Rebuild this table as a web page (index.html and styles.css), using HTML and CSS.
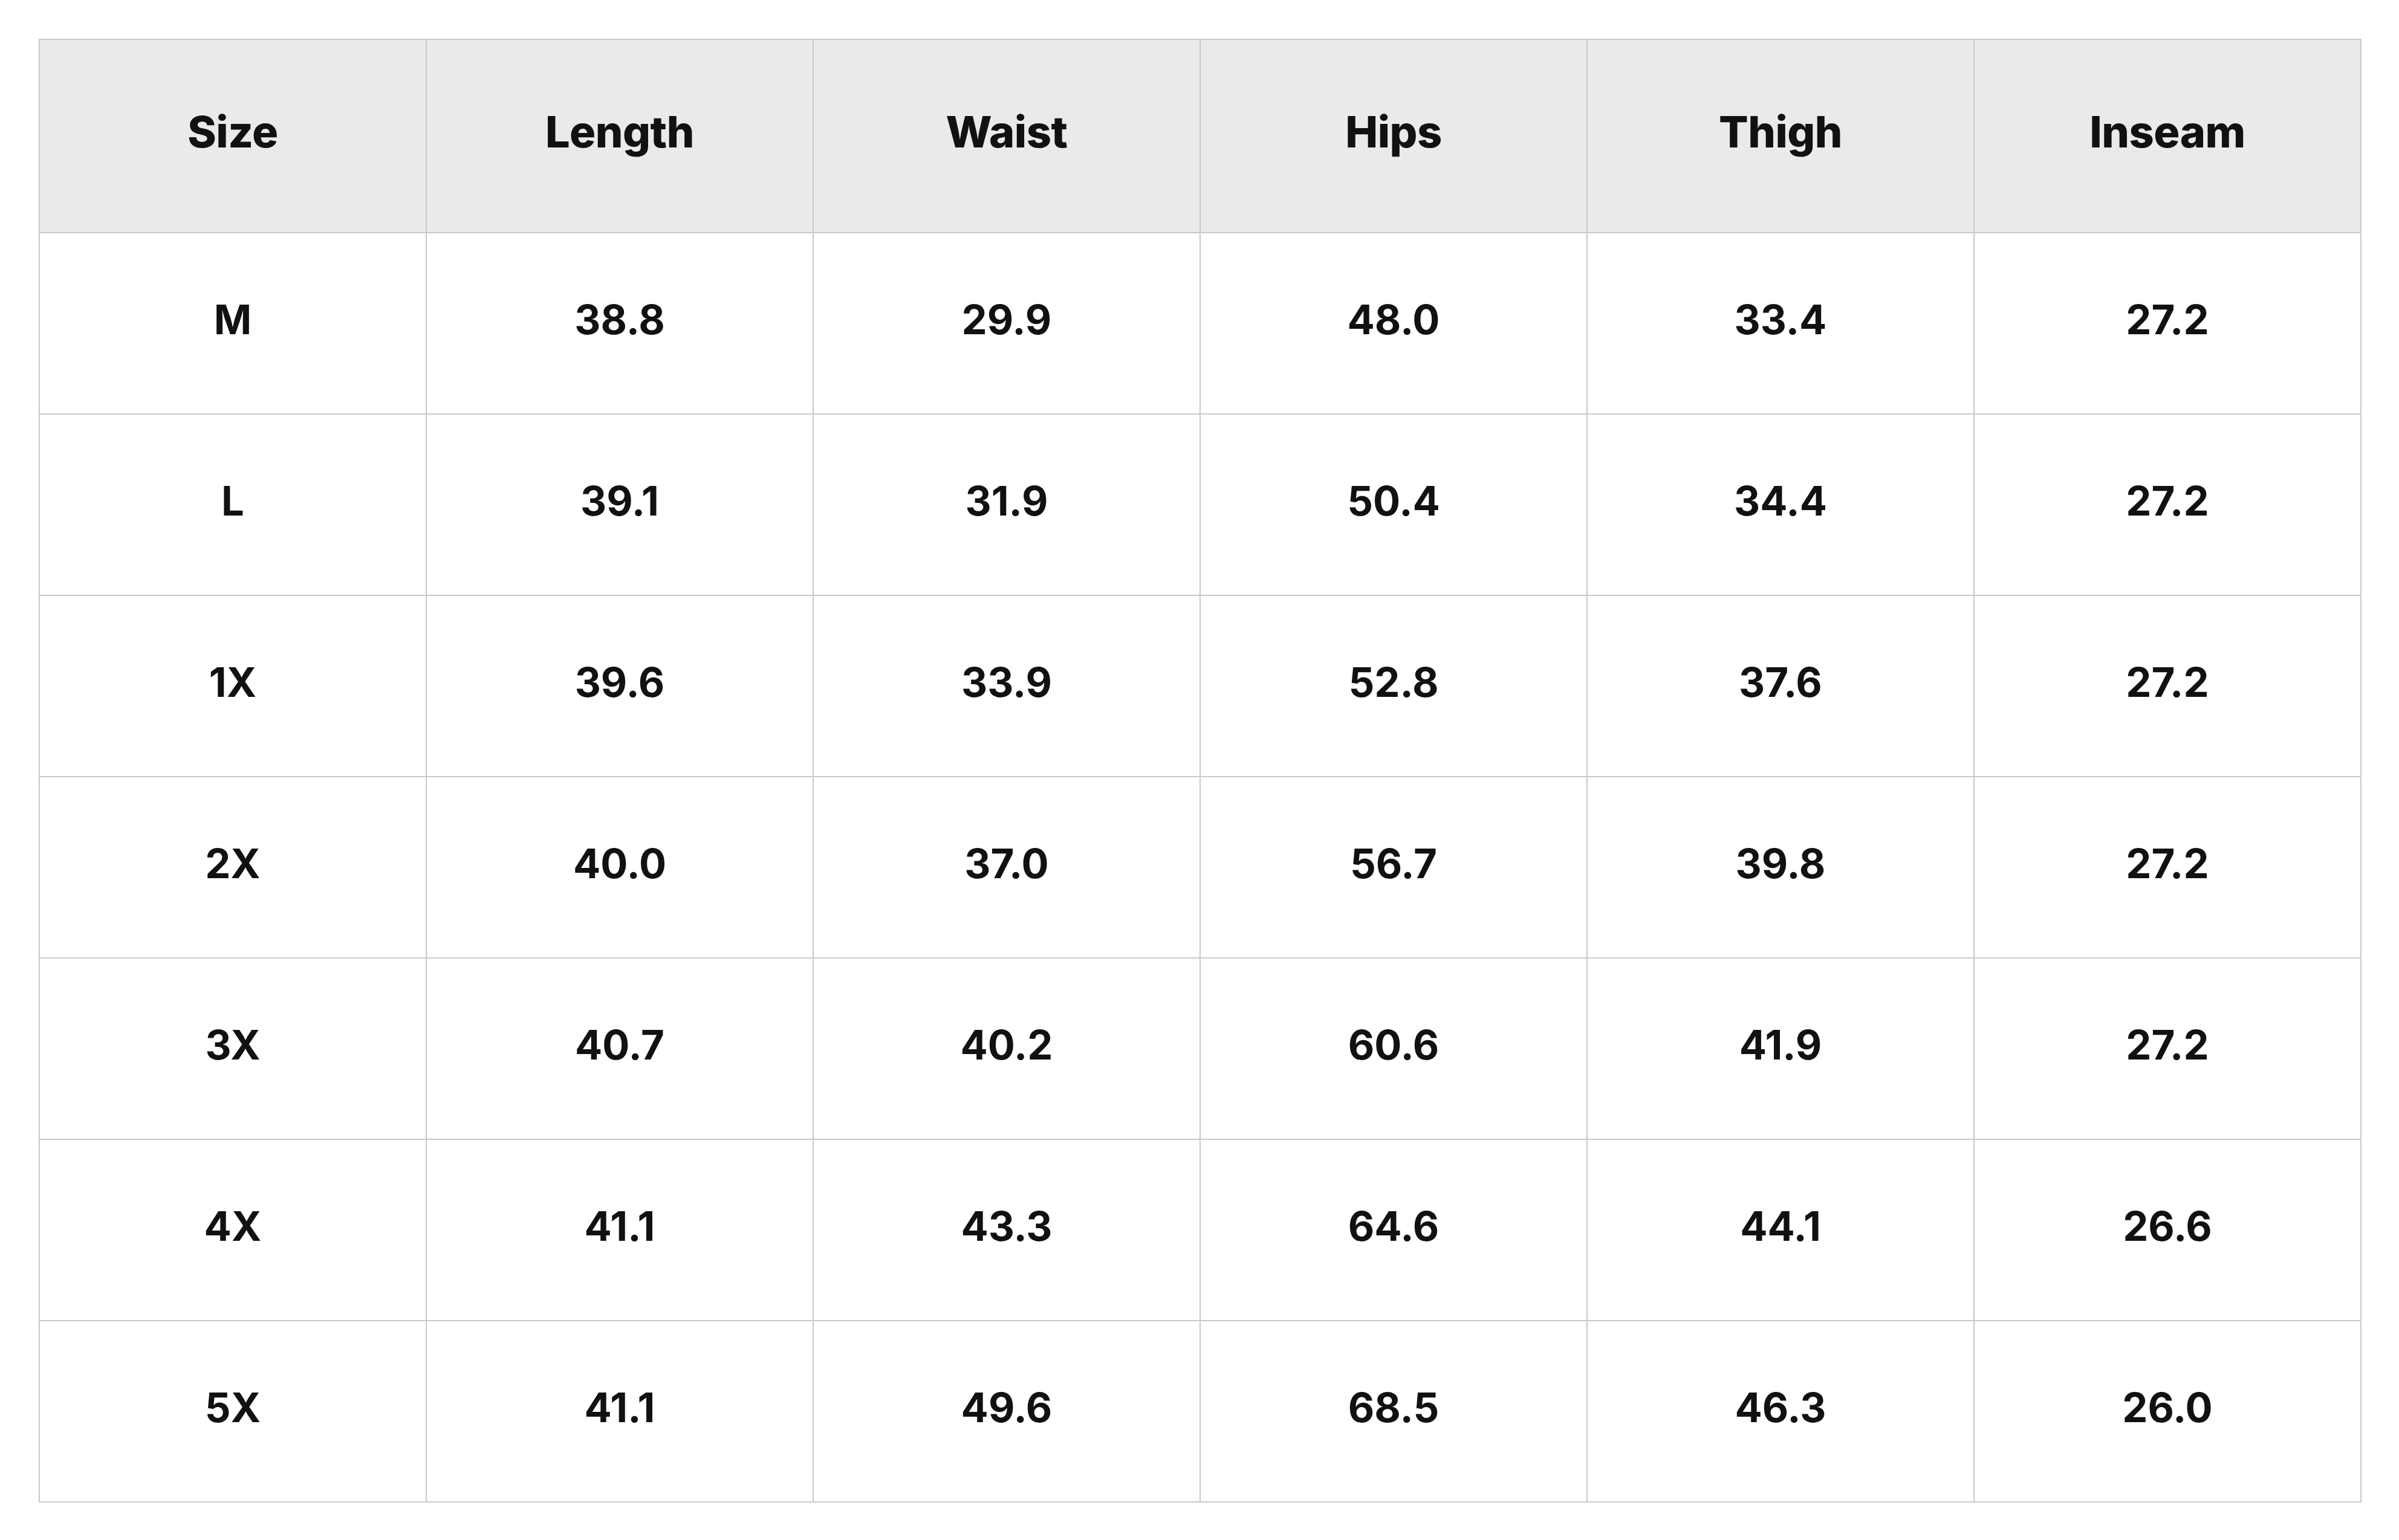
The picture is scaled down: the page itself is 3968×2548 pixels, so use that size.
FILE: index.html
```html
<!DOCTYPE html>
<html lang="en">
<head>
<meta charset="utf-8">
<title>Size Chart</title>
<link rel="stylesheet" href="styles.css">
</head>
<body>
<div class="chart" role="table">
  <div class="cell head">Size</div>
  <div class="cell head">Length</div>
  <div class="cell head">Waist</div>
  <div class="cell head">Hips</div>
  <div class="cell head">Thigh</div>
  <div class="cell head">Inseam</div>

  <div class="cell">M</div><div class="cell">38.8</div><div class="cell">29.9</div><div class="cell">48.0</div><div class="cell">33.4</div><div class="cell">27.2</div>
  <div class="cell">L</div><div class="cell">39.1</div><div class="cell">31.9</div><div class="cell">50.4</div><div class="cell">34.4</div><div class="cell">27.2</div>
  <div class="cell">1X</div><div class="cell">39.6</div><div class="cell">33.9</div><div class="cell">52.8</div><div class="cell">37.6</div><div class="cell">27.2</div>
  <div class="cell">2X</div><div class="cell">40.0</div><div class="cell">37.0</div><div class="cell">56.7</div><div class="cell">39.8</div><div class="cell">27.2</div>
  <div class="cell">3X</div><div class="cell">40.7</div><div class="cell">40.2</div><div class="cell">60.6</div><div class="cell">41.9</div><div class="cell">27.2</div>
  <div class="cell">4X</div><div class="cell">41.1</div><div class="cell">43.3</div><div class="cell">64.6</div><div class="cell">44.1</div><div class="cell">26.6</div>
  <div class="cell">5X</div><div class="cell">41.1</div><div class="cell">49.6</div><div class="cell">68.5</div><div class="cell">46.3</div><div class="cell">26.0</div>
</div>
</body>
</html>
```

FILE: styles.css
```css
html, body {
  margin: 0;
  background: #ffffff;
}
body {
  padding: 64px;
  font-family: Inter, "Liberation Sans", sans-serif;
  color: #111111;
}
.chart {
  display: grid;
  grid-template-columns: repeat(6, 638px);
  grid-auto-rows: 298px;
  grid-template-rows: 318px;
  gap: 2px;
  padding: 2px;
  width: max-content;
  background: #c9c9c9;
}
.cell {
  display: flex;
  align-items: center;
  justify-content: center;
  background: #ffffff;
  font-size: 67px;
  font-weight: 700;
  line-height: 1;
  padding-bottom: 14px;
  box-sizing: border-box;
}
.head {
  background: #eaeaea;
  font-size: 72px;
  font-weight: 800;
  letter-spacing: -0.5px;
  padding-bottom: 14px;
}
```
